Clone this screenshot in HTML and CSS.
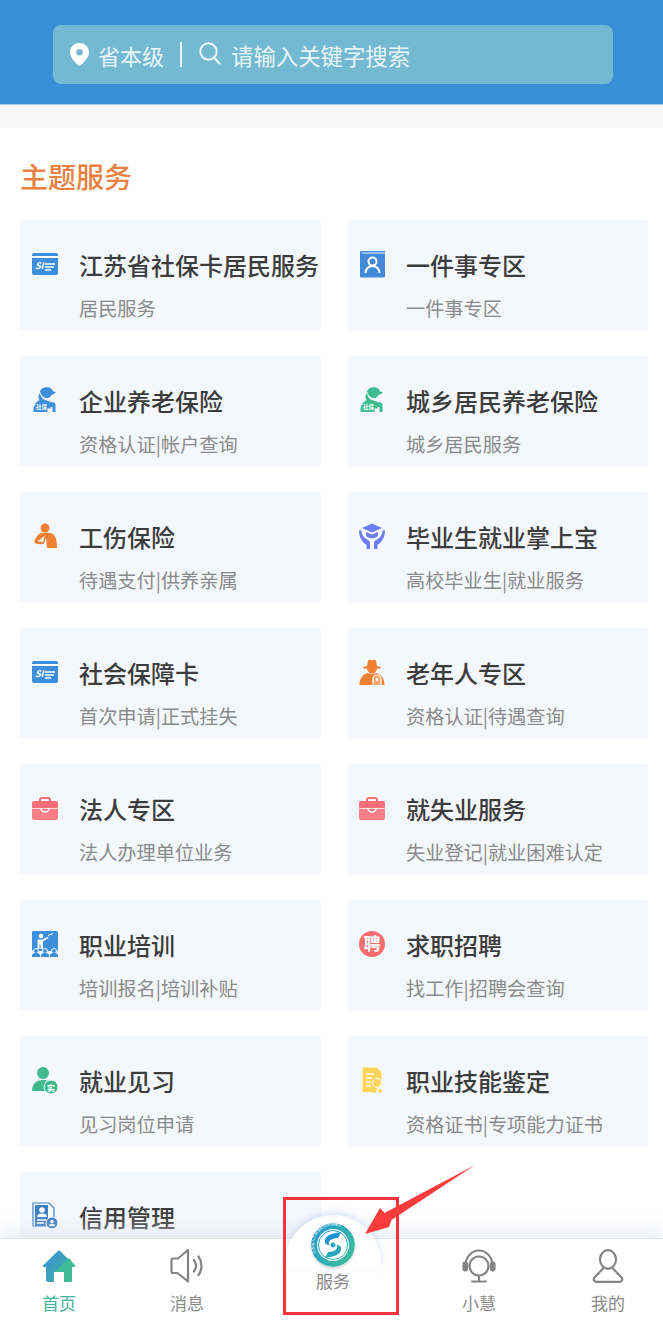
FILE: index.html
```html
<!DOCTYPE html>
<html lang="zh-CN">
<head>
    <meta charset="UTF-8">
    <meta name="viewport" content="width=device-width, initial-scale=1.0">
    <title>主题服务</title>
    <link rel="stylesheet" href="styles.css">
</head>
<body>

<svg class="sprites" width="0" height="0">
    <symbol id="i-card" viewBox="0 0 28 28">
        <rect x="1" y="3" width="26" height="22" rx="2" fill="#3d8fdc"/>
        <rect x="1" y="6" width="26" height="2" fill="#fff"/>
        <text x="4" y="19" class="icon-text" font-size="9" font-style="italic">SI</text>
        <path d="M14 14h10M14 17h9M14 20h6" stroke="#fff" stroke-width="1.3" fill="none"/>
    </symbol>
    <symbol id="i-case" viewBox="0 0 28 28">
        <path d="M9 8V5.5A1.5 1.5 0 0 1 10.5 4h7A1.5 1.5 0 0 1 19 5.500V8" fill="none" stroke="#fb6f78" stroke-width="2"/>
        <rect x="1" y="7" width="26" height="8" rx="2" fill="#fb6f78"/>
        <path d="M1 14h26v10a2 2 0 0 1-2 2H3a2 2 0 0 1-2-2z" fill="#fc7f87"/>
        <path d="M10 14.500a4 3.500 0 0 0 8 0" fill="none" stroke="#fff" stroke-width="1.500"/>
        <path d="M1 14.500h26" stroke="#fff" stroke-width="1" opacity=".7"/>
    </symbol>
    <symbol id="i-worker" viewBox="0 0 28 28">
        <path d="M9 5.500C10 2 14 .5 18 1.500c2 .5 3.500 2 4 4l3 .5c-.5 1-2.500 2.500-4.500 3-1 2.500-3.500 3.500-6 3-2.500-.5-4-3-5.500-6.500z"/>
        <path d="M9 7c.5 3 2 6 5 7l6 2 3 .5c1 .5 1.500 1.500 1.500 2.500v7h-3v-5h-2v1.500h-3V26H2.500C2 21 4.500 16 8.500 14 7 12 7 9 9 7z"/>
        <text x="5" y="23" class="icon-text" font-size="5.500">社保</text>
    </symbol>
</svg>

<header class="top-bar">
    <div class="search-box">
        <svg class="pin-icon" viewBox="0 0 19 23">
            <path fill-rule="evenodd" d="M9.500 0C4.300 0 0 4 0 9.200c0 5.500 5.500 10.800 9.500 13.800 4-3 9.500-8.300 9.500-13.800C19 4 14.700 0 9.500 0zm0 6a3.300 3.300 0 1 1 0 6.600 3.300 3.300 0 0 1 0-6.600z" fill="#fff"/>
        </svg>
        <span class="city">省本级</span>
        <span class="divider"></span>
        <svg class="search-icon" viewBox="0 0 22 23">
            <circle cx="9.500" cy="9.500" r="8.200" fill="none" stroke="#eef7fa" stroke-width="2"/>
            <path d="M15.500 16l5 5.500" stroke="#eef7fa" stroke-width="2" stroke-linecap="round"/>
        </svg>
        <span class="placeholder">请输入关键字搜索</span>
    </div>
</header>

<main class="content">
    <h2 class="section-title">主题服务</h2>
    <div class="card-grid">
        <div class="card">
            <div class="card-head">
                <svg class="card-icon"><use href="#i-card"/></svg>
                <span class="card-title">江苏省社保卡居民服务</span>
            </div>
            <p class="card-sub">居民服务</p>
        </div>
        <div class="card">
            <div class="card-head">
                <svg class="card-icon" viewBox="0 0 28 28">
                    <path d="M2 2.500A1.500 1.500 0 0 1 3.500 1H27v1.500H4v1h23V26a1.500 1.500 0 0 1-1.500 1.500h-22A1.500 1.500 0 0 1 2 26z" fill="#4389d9"/>
                    <circle cx="14.500" cy="11.500" r="4" fill="none" stroke="#fff" stroke-width="2"/>
                    <path d="M7.500 23c0-4 3-7 7-7s7 3 7 7" fill="none" stroke="#fff" stroke-width="2"/>
                </svg>
                <span class="card-title">一件事专区</span>
            </div>
            <p class="card-sub">一件事专区</p>
        </div>
        <div class="card">
            <div class="card-head">
                <svg class="card-icon worker-blue"><use href="#i-worker"/></svg>
                <span class="card-title">企业养老保险</span>
            </div>
            <p class="card-sub">资格认证|帐户查询</p>
        </div>
        <div class="card">
            <div class="card-head">
                <svg class="card-icon worker-green"><use href="#i-worker"/></svg>
                <span class="card-title">城乡居民养老保险</span>
            </div>
            <p class="card-sub">城乡居民服务</p>
        </div>
        <div class="card">
            <div class="card-head">
                <svg class="card-icon" viewBox="0 0 28 28">
                    <circle cx="14" cy="6" r="4.500" fill="#ee7f33"/>
                    <path d="M9 11.500c-2 1-3 2.500-5 6-1 2-.5 3.500 1 4 2.500 1 6 1 8 0l2-6 1 10.500H26c0-6-1-13-5-14.500-3-1-8-1-12 0z" fill="#ee7f33"/>
                    <path d="M14.500 12l-6 5.500-3 1c.5 2 5 2.500 7.500 1.500z" fill="#fff" stroke="#ee7f33" stroke-width="1.300"/>
                </svg>
                <span class="card-title">工伤保险</span>
            </div>
            <p class="card-sub">待遇支付|供养亲属</p>
        </div>
        <div class="card">
            <div class="card-head">
                <svg class="card-icon" viewBox="0 0 28 28" fill="#6b7cf6">
                    <path d="M14 1.500l10 4.500-10 4.500L4 6z"/>
                    <path d="M8 10v3.500c2 3.500 10 3.500 12 0V10l-6 2.500z"/>
                    <path d="M1 8.500l2.500 0c0 5 3 7.500 6.500 9.500 1.500 1 2 2 2 3.500V27H8.500v-4C4 20 1 15 1 8.500zM27 8.500h-2.500c0 5-3 7.500-6.500 9.500-1.500 1-2 2-2 3.500V27h3.500v-4c4.500-3 7.500-8 7.500-14.500z"/>
                </svg>
                <span class="card-title">毕业生就业掌上宝</span>
            </div>
            <p class="card-sub">高校毕业生|就业服务</p>
        </div>
        <div class="card">
            <div class="card-head">
                <svg class="card-icon"><use href="#i-card"/></svg>
                <span class="card-title">社会保障卡</span>
            </div>
            <p class="card-sub">首次申请|正式挂失</p>
        </div>
        <div class="card">
            <div class="card-head">
                <svg class="card-icon" viewBox="0 0 28 28">
                    <path d="M9 8l1-5c.3-1 1-1.500 2-1.300l2 .5 2-.5c1-.2 1.700.3 2 1.300l1 5 4 1.300c.5.5 0 1.200-1 1.200h-3c-.5 3-2 5-5 5s-4.500-2-5-5H6c-1 0-1.500-.7-1-1.200z" fill="#ee7f33"/>
                    <path d="M9.500 15c-4.500 1.500-8 5-8 12h25c0-7-3.500-10.500-8-12-3 1.500-6 1.500-9 0z" fill="#ee7f33"/>
                    <path d="M15 27v-6a4 4 0 0 1 8 0v6" fill="#f7a56b" stroke="#fff" stroke-width="1.200"/>
                    <circle cx="19" cy="21.500" r="1.500" fill="#fff"/>
                </svg>
                <span class="card-title">老年人专区</span>
            </div>
            <p class="card-sub">资格认证|待遇查询</p>
        </div>
        <div class="card">
            <div class="card-head">
                <svg class="card-icon"><use href="#i-case"/></svg>
                <span class="card-title">法人专区</span>
            </div>
            <p class="card-sub">法人办理单位业务</p>
        </div>
        <div class="card">
            <div class="card-head">
                <svg class="card-icon"><use href="#i-case"/></svg>
                <span class="card-title">就失业服务</span>
            </div>
            <p class="card-sub">失业登记|就业困难认定</p>
        </div>
        <div class="card">
            <div class="card-head">
                <svg class="card-icon" viewBox="0 0 28 28">
                    <rect x="1" y="1" width="26" height="20" rx="1.500" fill="#3d8fdc"/>
                    <circle cx="10" cy="6" r="2.300" fill="#fff"/>
                    <path d="M7 9.500h4l6-2.500.5 1-5.500 3.500V19H9.500v-4.500H8.500V19H6.500V11a1.500 1.500 0 0 1 .5-1.500z" fill="#fff"/>
                    <path d="M17 5.500l5-2" stroke="#fff" stroke-width="1"/>
                    <g fill="#3d8fdc">
                        <circle cx="5" cy="21" r="2.500" stroke="#f4f7fc"/>
                        <circle cx="14" cy="21" r="2.500" stroke="#f4f7fc"/>
                        <circle cx="23" cy="21" r="2.500" stroke="#f4f7fc"/>
                        <path d="M1 27v-1.500C1 24 2.500 23 4 23h2c1.500 0 3 1 3 2.500V27zM10 27v-1.500c0-1.500 1.500-2.500 3-2.500h2c1.500 0 3 1 3 2.500V27zM19 27v-1.500c0-1.500 1.500-2.500 3-2.500h2c1.500 0 3 1 3 2.500V27z"/>
                    </g>
                </svg>
                <span class="card-title">职业培训</span>
            </div>
            <p class="card-sub">培训报名|培训补贴</p>
        </div>
        <div class="card">
            <div class="card-head">
                <svg class="card-icon" viewBox="0 0 28 28">
                    <circle cx="14" cy="14" r="13" fill="#f96d6d"/>
                    <text x="14" y="20" class="icon-text" font-size="17" text-anchor="middle">聘</text>
                </svg>
                <span class="card-title">求职招聘</span>
            </div>
            <p class="card-sub">找工作|招聘会查询</p>
        </div>
        <div class="card">
            <div class="card-head">
                <svg class="card-icon" viewBox="0 0 28 28">
                    <circle cx="12" cy="7" r="6" fill="#3fb98d"/>
                    <path d="M1 25c0-7 4-11 11-11 5 0 8 2 9.500 5L15 25z" fill="#3fb98d"/>
                    <circle cx="20" cy="21" r="7" fill="#3fb98d" stroke="#f4f7fc" stroke-width="1"/>
                    <text x="20" y="24.500" class="icon-text" font-size="8" text-anchor="middle">实</text>
                </svg>
                <span class="card-title">就业见习</span>
            </div>
            <p class="card-sub">见习岗位申请</p>
        </div>
        <div class="card">
            <div class="card-head">
                <svg class="card-icon" viewBox="0 0 28 28">
                    <path d="M4 1h15l5 5v14h-6v6H4z" fill="#f9e9a8"/>
                    <path d="M5 2h13.500l4.500 4.500V17l-6 9H5z" fill="#fdd55b"/>
                    <path d="M8 8h8M8 12h6M8 16h5M8 20h5" stroke="#fff" stroke-width="1.300"/>
                    <circle cx="19" cy="17" r="4.500" fill="#fdd55b" stroke="#fff" stroke-width="1"/>
                    <circle cx="16" cy="25" r="2" fill="#fdd55b"/>
                    <circle cx="22" cy="25" r="2" fill="#fdd55b"/>
                </svg>
                <span class="card-title">职业技能鉴定</span>
            </div>
            <p class="card-sub">资格证书|专项能力证书</p>
        </div>
        <div class="card">
            <div class="card-head">
                <svg class="card-icon" viewBox="0 0 28 28">
                    <path d="M2 1h16l5 5v18H2z" fill="#fff" stroke="#3f7fc4" stroke-width="1.200"/>
                    <rect x="4" y="3" width="13" height="21" fill="#3f7fc4"/>
                    <circle cx="11" cy="8" r="2.800" fill="#fff"/>
                    <path d="M6 15c0-2.500 2-3.500 5-3.500s5 1 5 3.500z" fill="#fff"/>
                    <path d="M6 18h9M6 21h7" stroke="#fff" stroke-width="1.300"/>
                    <circle cx="21" cy="21" r="6" fill="#3f7fc4" stroke="#fff"/>
                    <circle cx="21" cy="19.500" r="1.700" fill="#fff"/>
                    <path d="M18 24c0-1.500 1.500-2.300 3-2.300s3 .8 3 2.300z" fill="#fff"/>
                </svg>
                <span class="card-title">信用管理</span>
            </div>
            <p class="card-sub">信用查询</p>
        </div>
    </div>
</main>

<nav class="tab-bar">
    <div class="tab tab-active">
        <svg class="tab-icon" viewBox="0 0 34 34">
            <defs>
                <linearGradient id="home-left" x1="0" y1="0" x2="1" y2="1">
                    <stop offset="0" stop-color="#3a90d8"/>
                    <stop offset="1" stop-color="#3fb5a0"/>
                </linearGradient>
            </defs>
            <path d="M17 1L33 16.500c.5 1 0 1.500-1 1.500h-2v13a2 2 0 0 1-2 2h-6V23h-10v10H6a2 2 0 0 1-2-2V18H2c-1 0-1.500-.5-1-1.500z" fill="url(#home-left)"/>
            <path d="M27 9l6 7.500c.5 1 0 1.500-1 1.500h-2v13a2 2 0 0 1-2 2h-6V23H12.500z" fill="#3fbb98"/>
        </svg>
        <span class="tab-label">首页</span>
    </div>
    <div class="tab">
        <svg class="tab-icon" viewBox="0 0 34 34" fill="none" stroke="#848484" stroke-width="2.200" stroke-linejoin="round" stroke-linecap="round">
            <path d="M1.500 10.500v12.500a1 1 0 0 0 1 1h5l10.500 8.500V1L8 9.500H2.500a1 1 0 0 0-1 1z"/>
            <path d="M24 11c2.500 3.500 2.500 8 0 11.500M28.500 7.500c4 5.500 4 13 0 18.500"/>
        </svg>
        <span class="tab-label">消息</span>
    </div>
    <div class="tab tab-center">
        <div class="logo-bump">
            <svg class="logo" viewBox="0 0 44 44">
                <defs>
                    <linearGradient id="logo-ring" x1="0" y1="0" x2="1" y2=".7">
                        <stop offset="0" stop-color="#1f93d6"/>
                        <stop offset="1" stop-color="#3dbf9c"/>
                    </linearGradient>
                    <path id="logo-text" d="M5 30A19 19 0 1 1 39 30"/>
                </defs>
                <circle cx="22" cy="22" r="22" fill="url(#logo-ring)"/>
                <circle cx="22" cy="22" r="16" fill="#fff"/>
                <circle cx="22" cy="22" r="14.500" fill="none" stroke="url(#logo-ring)" stroke-width="1"/>
                <text class="logo-ring-text"><textPath href="#logo-text">江苏省人力资源和社会保障厅</textPath></text>
                <path d="M30 9l-3 6c-3 0-8 1-9 4-1 2 1 3 1 3-3 0-6-1-5-5 1-5 8-7 16-8z" fill="#1f93d6"/>
                <path d="M14 35l3-6c3 0 8-1 9-4 1-2-1-3-1-3 3 0 6 1 5 5-1 5-8 7-16 8z" fill="#2ba7c0"/>
                <circle cx="22" cy="22" r="2.500" fill="#2ba7c0"/>
            </svg>
        </div>
        <span class="tab-label">服务</span>
    </div>
    <div class="tab">
        <svg class="tab-icon" viewBox="0 0 34 34" fill="none" stroke="#848484" stroke-width="2.200" stroke-linecap="round">
            <path d="M3.500 17C3.500 8 9.500 1.500 17 1.500S30.500 8 30.500 17"/>
            <circle cx="17" cy="17" r="9.500"/>
            <rect x="1.500" y="13.500" width="3.500" height="8" rx="1.700" fill="#848484"/>
            <rect x="29" y="13.500" width="3.500" height="8" rx="1.700" fill="#848484"/>
            <path d="M17 27v4M10 32.500h14"/>
        </svg>
        <span class="tab-label">小慧</span>
    </div>
    <div class="tab tab-last">
        <svg class="tab-icon" viewBox="0 0 34 34" fill="none" stroke="#848484" stroke-width="2.200" stroke-linejoin="round">
            <ellipse cx="17" cy="10.500" rx="8" ry="9.300"/>
            <path d="M12.500 19l-9 9.500c-1.500 2-.5 4.300 2 4.300h23c2.500 0 3.500-2.300 2-4.300l-9-9.500"/>
        </svg>
        <span class="tab-label">我的</span>
    </div>
</nav>

<!-- annotation drawn on top of the screenshot -->
<div class="mark-box"></div>
<svg class="mark-arrow" viewBox="0 0 120 70">
    <path d="M5 69L20 43l4.500 5L115 0 31.500 55 29 62z" fill="#fb3c3c"/>
</svg>

</body>
</html>
```

FILE: styles.css
```css
html,
body {
    height: 100%;
}

body {
    margin: 0;
    height: 100vh;
    position: relative;
    overflow: hidden;
    display: flex;
    flex-direction: column;
    background: #fff;
    font-family: "Noto Sans CJK SC", "Noto Sans", sans-serif;
    color: #3c3c3c;
}

.sprites {
    display: block;
}

.icon-text {
    fill: #fff;
    font-family: "Noto Sans CJK SC", sans-serif;
    font-weight: 700;
}

.top-bar {
    flex: none;
    height: 104px;
    padding: 25px 50px 0 53px;
    box-sizing: border-box;
    background: #398ed8;
    border-bottom: 1px solid #a8cdec;
    box-sizing: content-box;
    height: 79px;
    margin-bottom: 23px;
    box-shadow: 0 23px 0 #f6f6f6;
}

.search-box {
    height: 59px;
    display: flex;
    align-items: center;
    padding-left: 17px;
    background: #72b9d1;
    border-radius: 8px;
    color: #e9f5f8;
    font-size: 22px;
}

.pin-icon {
    width: 19px;
    height: 23px;
}

.city {
    margin-left: 9px;
}

.divider {
    width: 2px;
    height: 25px;
    margin: 0 17px 0 16px;
    background: #e9f5f8;
}

.search-icon {
    width: 22px;
    height: 23px;
    margin-top: -3px;
}

.placeholder {
    margin-left: 10px;
    font-size: 22.4px;
}

.content {
    flex: 1;
    min-height: 0;
    overflow: hidden;
    padding: 28px 15px 0 20px;
}

.section-title {
    margin: 0 0 24px;
    font-size: 28px;
    line-height: 40px;
    font-weight: 500;
    color: #e9803f;
}

.card-grid {
    display: grid;
    grid-template-columns: 301px 301px;
    grid-auto-rows: 111px;
    column-gap: 26px;
    row-gap: 25px;
}

.card {
    padding: 30px 0 0 11px;
    box-sizing: border-box;
    background: #f4f7fc;
    border-radius: 4px;
}

.card-head {
    display: flex;
    align-items: center;
    gap: 20px;
    height: 28px;
}

.card-icon {
    flex: none;
    width: 28px;
    height: 28px;
}

.worker-blue {
    fill: #3d8fdc;
}

.worker-green {
    fill: #3fbd91;
}

.card-title {
    font-size: 24px;
    font-weight: 500;
    white-space: nowrap;
}

.card-sub {
    margin: 16px 0 0 48px;
    font-size: 19.2px;
    line-height: 28px;
    color: #8a8a8a;
}

.tab-bar {
    flex: none;
    position: relative;
    height: 83px;
    display: grid;
    grid-template-columns: 118px 138px 154px 138px 1fr;
    background: #fff;
    border-top: 1px solid #e4e6ea;
    box-shadow: 0 -10px 14px rgba(225, 229, 236, 0.55);
}

.tab {
    display: flex;
    flex-direction: column;
    align-items: center;
}

.tab-last {
    padding-left: 5px;
}

.tab-icon {
    width: 34px;
    height: 34px;
    margin-top: 10px;
}

.tab-label {
    margin-top: 8px;
    font-size: 17px;
    line-height: 24px;
    color: #8a8a8a;
}

.tab-active .tab-label {
    color: #45b49c;
}

.tab-center .tab-label {
    margin-top: 0;
}

.logo-bump {
    width: 96px;
    height: 54px;
    margin-top: -24px;
    margin-bottom: 0;
    padding-top: 0;
    display: flex;
    justify-content: center;
    align-items: center;
    border-radius: 48px 48px 0 0;
    background: #fff;
    box-shadow: 0 -3px 6px rgba(190, 205, 235, 0.55);
    position: relative;
}

.logo {
    width: 44px;
    height: 44px;
    margin-top: 6px;
    border-radius: 50%;
    box-shadow: 0 2px 2px rgba(0, 0, 0, 0.15);
}

.logo-ring-text {
    font-size: 3.600px;
    fill: #fff;
}

.mark-box {
    position: absolute;
    left: 283px;
    top: 1197px;
    width: 110px;
    height: 112px;
    border: 3px solid #f8333c;
}

.mark-arrow {
    position: absolute;
    left: 360px;
    top: 1165px;
    width: 120px;
    height: 70px;
}
```
